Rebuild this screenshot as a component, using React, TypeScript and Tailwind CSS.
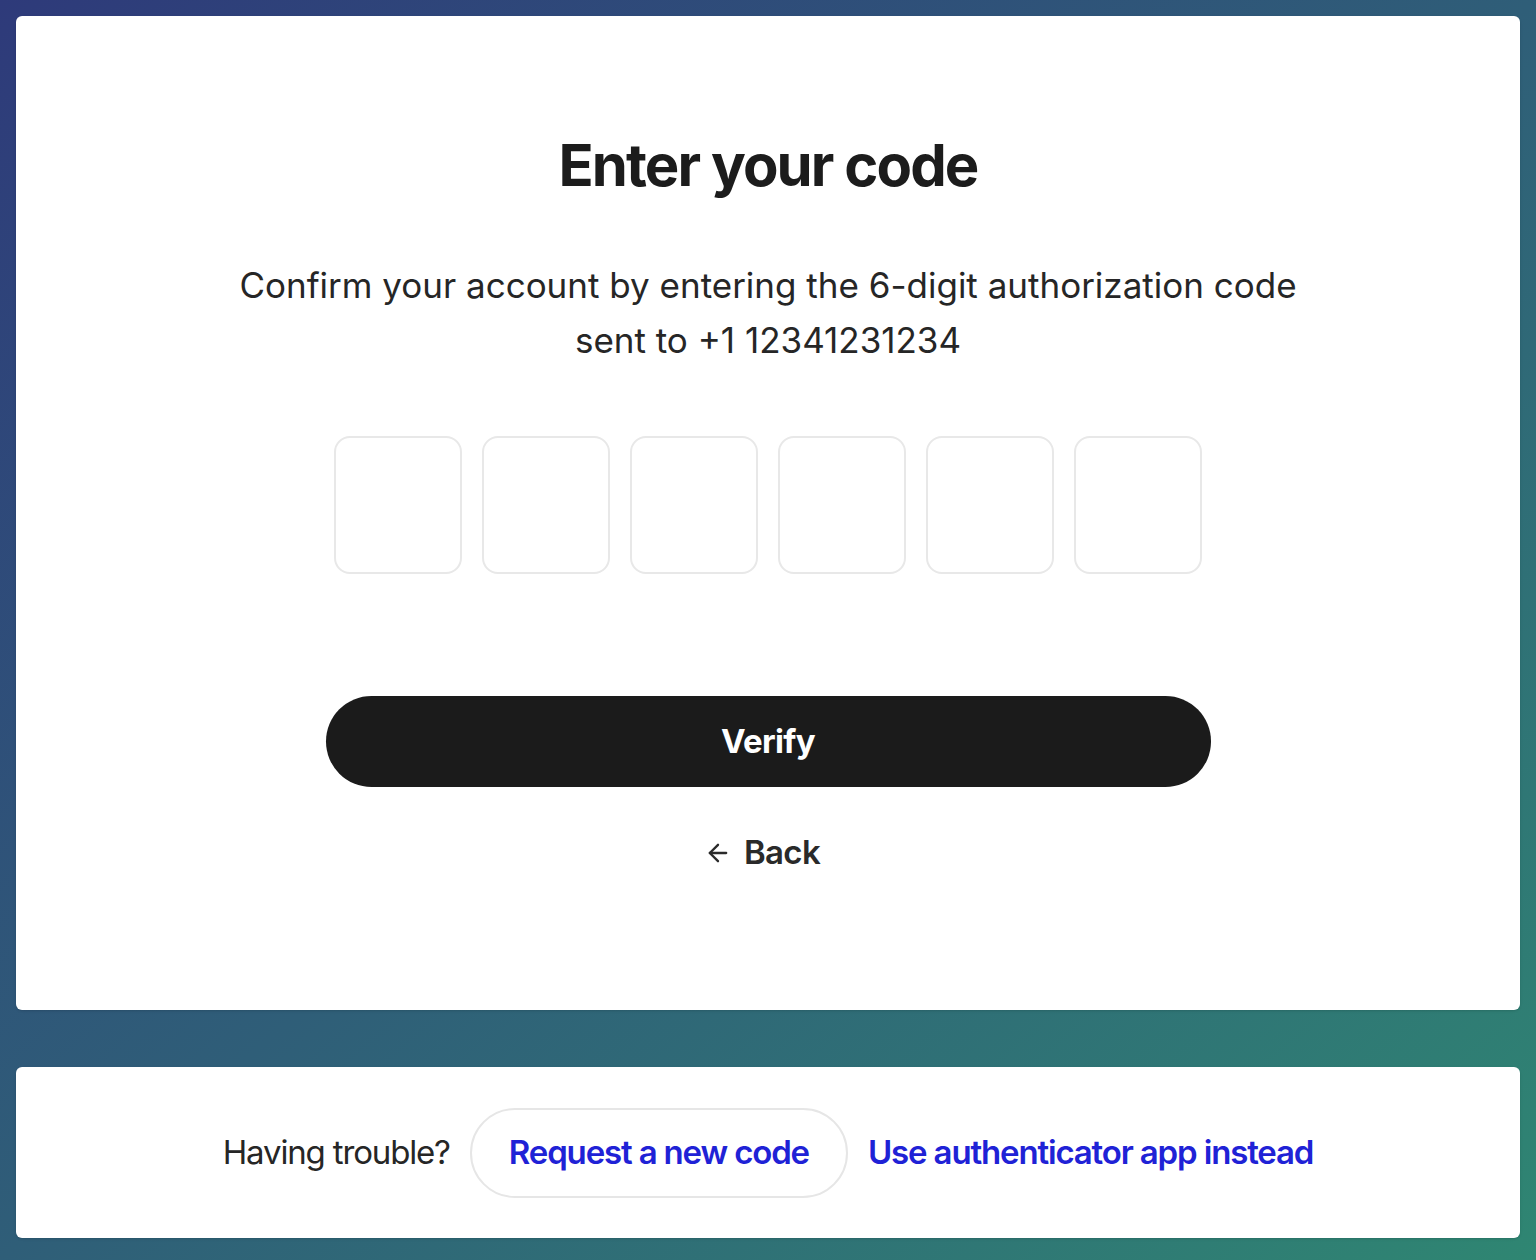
import { ArrowLeft } from "lucide-react"

const digits = [0, 1, 2, 3, 4, 5]

export default function App() {
    return (
        <div
            className="min-h-[1260px] w-full bg-gradient-to-br from-[#2e3a7a] via-[#2f5e78] to-[#2f8672] p-4 flex flex-col gap-[57px]"
            style={{ fontFamily: "Inter, 'Liberation Sans', sans-serif" }}
        >
            {/* Main card */}
            <div className="h-[994px] bg-white rounded-md shadow-sm flex flex-col items-center pt-[120px]">
                <h1 className="text-[58px] font-bold text-[#1c1c1c] tracking-[-0.033em] leading-none">
                    Enter your code
                </h1>
                <p className="mt-[64px] text-[35px] text-[#262626] tracking-[0em] leading-[55px] text-center max-w-[1200px]">
                    Confirm your account by entering the 6-digit authorization code
                    <br />
                    sent to +1 12341231234
                </p>

                <div className="mt-[68px] flex gap-5">
                    {digits.map((d) => (
                        <input
                            key={d}
                            type="text"
                            maxLength={1}
                            className="w-[128px] h-[138px] rounded-2xl border-2 border-[#e8e8e8] text-center text-5xl outline-none"
                        />
                    ))}
                </div>

                <button className="mt-[122px] w-[885px] h-[91px] rounded-full bg-[#1b1b1b] text-white text-[33px] font-bold tracking-[-0.02em]">
                    Verify
                </button>

                <button className="mt-[41px] flex items-center gap-3 text-[#2a2a2a] text-[33px] font-semibold tracking-[-0.02em] -ml-3">
                    <ArrowLeft className="w-7 h-7" strokeWidth={2} />
                    Back
                </button>
            </div>

            {/* Trouble card */}
            <div className="h-[171px] bg-white rounded-md shadow-sm flex items-center justify-center gap-5">
                <span className="text-[33px] text-[#262626] tracking-[-0.035em]">Having trouble?</span>
                <button className="h-[90px] px-[37px] rounded-full border-2 border-[#e6e6e6] text-[33px] font-semibold text-[#1f22d6] tracking-[-0.035em]">
                    Request a new code
                </button>
                <button className="text-[33px] font-semibold text-[#1f22d6] tracking-[-0.035em]">
                    Use authenticator app instead
                </button>
            </div>
        </div>
    )
}
